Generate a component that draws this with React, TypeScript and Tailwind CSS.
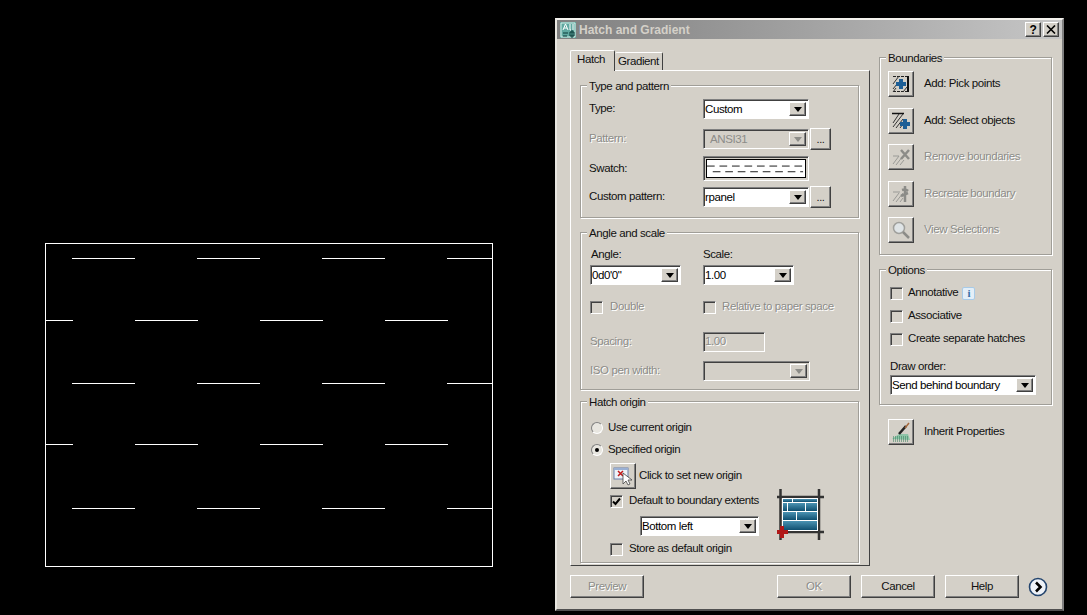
import React from "react";

const raised =
  "border border-t-white border-l-white border-r-[#404040] border-b-[#404040] shadow-[inset_-1px_-1px_0_#808080] bg-[#d4d0c8]";
const sunken =
  "border border-t-[#808080] border-l-[#808080] border-r-white border-b-white shadow-[inset_1px_1px_0_#404040]";
const disabledText = "text-[#8c8c88] [text-shadow:1px_1px_0_#ffffff]";

const Arrow = ({ off }: { off?: boolean }) => (
  <span className={`flex h-full w-[17px] shrink-0 items-center justify-center ${raised}`}>
    <span
      className={`h-0 w-0 border-x-[4px] border-t-[5px] border-x-transparent ${
        off ? "border-t-[#8c8c88]" : "border-t-black"
      }`}
    />
  </span>
);

const Combo = ({ value, off, className }: { value?: string; off?: boolean; className: string }) => (
  <div className={`flex h-[20px] items-stretch py-[2px] pl-[1px] pr-[2px] ${sunken} ${off ? "bg-[#d4d0c8]" : "bg-white"} ${className}`}>
    <span className={`flex-1 truncate leading-[15px] ${off ? "pl-[5px] text-[#8c8c88]" : "text-black"}`}>
      {value}
    </span>
    <Arrow off={off} />
  </div>
);

const Dots = () => (
  <div className={`ml-[1px] flex h-[22px] w-[21px] items-center justify-center text-[11px] leading-none ${raised}`}>
    ...
  </div>
);

const Box = ({ checked }: { checked?: boolean }) => (
  <span className={`flex h-[13px] w-[13px] shrink-0 items-center justify-center ${sunken} bg-[#d4d0c8]`}>
    {checked && (
      <svg width="9" height="9" viewBox="0 0 9 9">
        <path d="M1 4.5 3.5 7 8 1.5" fill="none" stroke="#000" strokeWidth="2" />
      </svg>
    )}
  </span>
);

const Check = ({
  label,
  checked,
  off,
  className = "",
  gap = "mr-[5px]",
}: {
  label: string;
  checked?: boolean;
  off?: boolean;
  className?: string;
  gap?: string;
}) => (
  <div className={`flex h-[16px] items-center ${className}`}>
    <span className={gap}>
      <Box checked={checked} />
    </span>
    <span className={off ? disabledText : ""}>{label}</span>
  </div>
);

const Radio = ({ label, on, className = "" }: { label: string; on?: boolean; className?: string }) => (
  <div className={`flex h-[16px] items-center ${className}`}>
    <span className="mr-[5px] flex h-[12px] w-[12px] items-center justify-center rounded-full border border-t-[#808080] border-l-[#808080] border-r-white border-b-white bg-[#e8e6e0]">
      {on && <span className="h-[4px] w-[4px] rounded-full bg-black" />}
    </span>
    {label}
  </div>
);

const Group = ({ title, className, children }: { title: string; className: string; children: React.ReactNode }) => (
  <div className={`relative border border-[#a09e98] shadow-[1px_1px_0_#fff,inset_1px_1px_0_#fff] ${className}`}>
    <span className="absolute -top-[8px] left-[6px] bg-[#d4d0c8] px-[2px] leading-[16px]">{title}</span>
    {children}
  </div>
);

const IconButton = ({ children, className = "" }: { children: React.ReactNode; className?: string }) => (
  <div className={`flex h-[26px] w-[26px] shrink-0 items-center justify-center ${raised} ${className}`}>{children}</div>
);

const PickPointsIcon = () => (
  <svg width="18" height="18" viewBox="0 0 18 18">
    <path d="M1 1.5h15M1 16.5h15" stroke="#222" strokeDasharray="3 1" />
    <path d="M16 1v16" stroke="#111" strokeWidth="2" />
    <path d="M1 9 7 1M1 14l4-5M1 17l3-4M11 17l4-5" stroke="#333" />
    <path d="M9 4v10M4 9h10" stroke="#1e5f96" strokeWidth="4" />
  </svg>
);

const SelectObjectsIcon = () => (
  <svg width="20" height="18" viewBox="0 0 20 18">
    <path d="M1 1.5h12" stroke="#111" strokeWidth="1.5" />
    <path d="M2 11 8 2M2 15 12 2M5 16 12 7M9 16l3-4" stroke="#333" fill="none" />
    <path d="M14 7v10M9 12h10" stroke="#1e5f96" strokeWidth="4" />
  </svg>
);

const RemoveIcon = () => (
  <svg width="20" height="20" viewBox="0 0 20 20">
    <path d="M2 17 8 9M5 18l7-9M9 18l4-5M2 9h6" stroke="#9a9a96" fill="none" />
    <path d="M10 3l8 9M18 3l-8 9" stroke="#8c8c88" strokeWidth="2.5" />
  </svg>
);

const RecreateIcon = () => (
  <svg width="20" height="20" viewBox="0 0 20 20">
    <path d="M2 17 8 9M5 18l7-9M9 18l3-4M2 8h7" stroke="#9a9a96" fill="none" />
    <path d="M14 2v16M11 6c3-1 5 0 6 1M10 12l7-3" stroke="#8c8c88" strokeWidth="2.5" fill="none" />
  </svg>
);

const ViewIcon = () => (
  <svg width="20" height="20" viewBox="0 0 20 20">
    <circle cx="8" cy="8" r="5.5" fill="#dfe4e6" stroke="#a0a09c" strokeWidth="1.5" />
    <path d="M12 12l6 6" stroke="#8c8c88" strokeWidth="2.5" />
  </svg>
);

const InheritIcon = () => (
  <svg width="20" height="20" viewBox="0 0 20 20">
    <path d="M1 17 8 12 17 12 19 18Z" fill="#8fc4a8" />
    <path d="M2 15h16M2 17h16M2 19h16" stroke="#2f7d58" strokeDasharray="1 1" />
    <path d="M8 12 15 4" stroke="#222" strokeWidth="2.5" />
    <path d="M14 6 18 1" stroke="#a5663a" strokeWidth="1.5" />
  </svg>
);

const OriginIcon = () => (
  <svg width="22" height="22" viewBox="0 0 22 22">
    <rect x="2" y="3" width="14" height="11" fill="#eef2f8" stroke="#6a7fa8" />
    <path d="M2 3h14v2H2z" fill="#9ab0d4" />
    <path d="M6 6l5 5M11 6l-5 5" stroke="#c01818" strokeWidth="1.5" />
    <path d="M11 8v11l3-3 2 4 2-1-2-4h4z" fill="#fff" stroke="#444" strokeWidth="0.8" />
  </svg>
);

const BrickIcon = () => (
  <svg width="50" height="52" viewBox="0 0 50 52" className="shrink-0">
    <defs>
      <linearGradient id="brick" x1="0" y1="0" x2="0" y2="1">
        <stop offset="0" stopColor="#4b93b3" />
        <stop offset="1" stopColor="#0f4f70" />
      </linearGradient>
    </defs>
    <path d="M0 8h47M0 43h47M3.5 0v51M42 0v51" stroke="#333" strokeWidth="2.5" />
    <rect x="5" y="9" width="36" height="33" fill="#fff" />
    {[
      [6, 10, 9, 3],
      [16, 10, 24, 3],
      [6, 14, 4, 8],
      [11, 14, 17, 8],
      [29, 14, 11, 8],
      [6, 23, 13, 8],
      [20, 23, 20, 8],
      [6, 32, 34, 9],
    ].map(([x, y, w, h]) => (
      <rect key={`${x}-${y}`} x={x} y={y} width={w} height={h} fill="url(#brick)" />
    ))}
    <path d="M5 37v12M-1 43h12" stroke="#b01818" strokeWidth="4" />
  </svg>
);

const AppIcon = () => (
  <svg width="16" height="16" viewBox="0 0 16 16" className="mx-[3px] shrink-0">
    <rect width="16" height="16" fill="#5fa8a0" />
    <path d="M1 1h14v14H1z" fill="none" stroke="#d8efe8" />
    <path d="M3 8 5.5 2 8 8M4 6h3M10 2v6h1M13 2v6" stroke="#fff" fill="none" />
    <path d="M3 11h5M3 14h4M10 10h4v4h-4zM12 8v8" stroke="#0b3a38" fill="none" />
  </svg>
);

const Swatch = () => (
  <div className={`flex h-[25px] w-[106px] items-stretch p-[2px] ${sunken} bg-[#d4d0c8]`}>
    <svg width="100%" height="100%" viewBox="0 0 102 21" preserveAspectRatio="none" className="border-[1px] border-black bg-white">
      <path d="M0 7.5h100" stroke="#000" strokeWidth="1" strokeDasharray="8 5" />
      <path d="M6 14.5h94" stroke="#000" strokeWidth="1" strokeDasharray="8 5" />
    </svg>
  </div>
);

const DialogButton = ({ label, off, className }: { label: string; off?: boolean; className: string }) => (
  <div className={`flex h-[23px] w-[74px] items-center justify-center ${raised} ${off ? disabledText : ""} ${className}`}>
    {label}
  </div>
);

const HatchDrawing = () => {
  const rows = [
    { y: 258.5, segs: [[72, 135], [197, 260], [322, 385], [447, 492]] },
    { y: 320.5, segs: [[46, 73], [135, 198], [260, 323], [385, 448]] },
    { y: 383.5, segs: [[72, 135], [197, 260], [322, 385], [447, 492]] },
    { y: 444.5, segs: [[46, 73], [135, 198], [260, 323], [385, 448]] },
    { y: 508.5, segs: [[72, 135], [197, 260], [322, 385], [447, 492]] },
  ];
  return (
    <svg width="555" height="615" viewBox="0 0 555 615" className="shrink-0">
      <rect x="45.5" y="243.5" width="447" height="323" fill="none" stroke="#fff" />
      {rows.map((r) =>
        r.segs.map(([a, b]) => <path key={`${r.y}-${a}`} d={`M${a} ${r.y}H${b}`} stroke="#fff" />)
      )}
    </svg>
  );
};

export default function App() {
  return (
    <div className="flex h-[615px] w-[1087px] overflow-hidden bg-black font-['Liberation_Sans',sans-serif] text-[11.5px] tracking-[-0.4px] text-[#111]">
      <HatchDrawing />

      <div className="mt-[18px] flex h-[593px] w-[509px] shrink-0 flex-col border-2 border-t-[#f4f2ee] border-l-[#e8e6e0] border-r-[#808080] border-b-[#505050] bg-[#d4d0c8]">
        {/* title bar */}
        <div className="flex h-[19px] shrink-0 items-center bg-gradient-to-r from-[#808080] to-[#c6c6c6]">
          <AppIcon />
          <span className="text-[12px] font-bold tracking-normal text-[#d4d0c8]">Hatch and Gradient</span>
          <div className={`ml-auto flex h-[15px] w-[16px] items-center justify-center text-[12px] font-bold text-black ${raised}`}>?</div>
          <div className={`ml-[2px] mr-[3px] flex h-[15px] w-[16px] items-center justify-center ${raised}`}>
            <svg width="10" height="9" viewBox="0 0 10 9">
              <path d="M1 0.5l8 8M9 0.5l-8 8" stroke="#000" strokeWidth="1.6" />
            </svg>
          </div>
        </div>

        <div className="ml-[13px] flex flex-1 gap-[9px]">
          {/* left column */}
          <div className="mt-[11px] flex w-[300px] shrink-0 flex-col">
            <div className="flex h-[20px] items-end">
              <div className="relative z-10 -mb-[1px] flex h-[21px] w-[45px] items-center rounded-t-[2px] border-l border-t border-r border-l-white border-t-white border-r-[#404040] bg-[#d4d0c8] pb-[3px] pl-[6px]">
                Hatch
              </div>
              <div className="flex h-[18px] w-[48px] items-center rounded-t-[2px] border-t border-r border-t-white border-r-[#404040] pl-[3px]">
                Gradient
              </div>
            </div>
            <div className="flex h-[496px] flex-col border border-t-white border-l-white border-r-[#404040] border-b-[#404040] px-[9px] pt-[14px]">
              <Group title="Type and pattern" className="h-[133px] w-[279px] shrink-0 pl-[8px] pt-[13px]">
                <div className="flex h-[20px] items-center">
                  <span className="w-[114px]">Type:</span>
                  <Combo value="Custom" className="w-[106px]" />
                </div>
                <div className="mt-[9px] flex h-[22px] items-center">
                  <span className={`w-[114px] ${disabledText}`}>Pattern:</span>
                  <Combo value="ANSI31" off className="w-[106px]" />
                  <Dots />
                </div>
                <div className="mt-[6px] flex h-[25px] items-center">
                  <span className="w-[114px]">Swatch:</span>
                  <Swatch />
                </div>
                <div className="mt-[5px] flex h-[22px] items-center">
                  <span className="w-[114px]">Custom pattern:</span>
                  <Combo value="rpanel" className="w-[106px]" />
                  <Dots />
                </div>
              </Group>

              <Group title="Angle and scale" className="mt-[14px] h-[158px] w-[279px] shrink-0 pl-[9px] pt-[14px]">
                <div className="flex">
                  <div className="w-[113px] pl-[1px] leading-[14px]">Angle:</div>
                  <div className="leading-[14px]">Scale:</div>
                </div>
                <div className="mt-[4px] flex">
                  <div className="w-[113px]">
                    <Combo value="0d0'0&quot;" className="w-[91px]" />
                  </div>
                  <Combo value="1.00" className="w-[91px]" />
                </div>
                <div className="mt-[14px] flex">
                  <Check label="Double" off className="w-[113px]" gap="mr-[7px]" />
                  <Check label="Relative to paper space" off gap="mr-[6px]" />
                </div>
                <div className="mt-[17px] flex h-[20px] items-center">
                  <span className={`w-[113px] ${disabledText}`}>Spacing:</span>
                  <div className={`h-[20px] w-[62px] pl-[1px] leading-[17px] ${sunken} bg-[#d4d0c8] ${disabledText}`}>1.00</div>
                </div>
                <div className="mt-[9px] flex h-[20px] items-center">
                  <span className={`w-[113px] ${disabledText}`}>ISO pen width:</span>
                  <Combo off className="w-[107px]" />
                </div>
              </Group>

              <Group title="Hatch origin" className="mt-[11px] h-[162px] w-[279px] shrink-0 pl-[10px] pt-[18px]">
                <Radio label="Use current origin" />
                <Radio label="Specified origin" on className="mt-[6px]" />
                <div className="ml-[19px] mt-[5px] flex items-center">
                  <IconButton>
                    <OriginIcon />
                  </IconButton>
                  <span className="ml-[3px]">Click to set new origin</span>
                </div>
                <div className="ml-[19px] flex">
                  <div className="w-[167px] shrink-0">
                    <Check label="Default to boundary extents" checked className="mt-[4px]" gap="mr-[6px]" />
                    <div className="ml-[30px] mt-[7px]">
                      <Combo value="Bottom left" className="w-[119px]" />
                    </div>
                    <Check label="Store as default origin" className="mt-[5px]" gap="mr-[6px]" />
                  </div>
                  <BrickIcon />
                </div>
              </Group>
            </div>
          </div>

          {/* right column */}
          <div className="mt-[18px] flex w-[173px] shrink-0 flex-col">
            <Group title="Boundaries" className="h-[198px] shrink-0 pl-[8px] pt-[13px]">
              {[
                { label: "Add: Pick points", icon: <PickPointsIcon /> },
                { label: "Add: Select objects", icon: <SelectObjectsIcon /> },
                { label: "Remove boundaries", icon: <RemoveIcon />, off: true },
                { label: "Recreate boundary", icon: <RecreateIcon />, off: true },
                { label: "View Selections", icon: <ViewIcon />, off: true },
              ].map((b) => (
                <div key={b.label} className="mb-[10.5px] flex items-center">
                  <IconButton>{b.icon}</IconButton>
                  <span className={`ml-[10px] ${b.off ? disabledText : ""}`}>{b.label}</span>
                </div>
              ))}
            </Group>

            <Group title="Options" className="mt-[14px] h-[136px] shrink-0 pl-[10px] pt-[15px]">
              <div className="flex items-center">
                <Check label="Annotative" />
                <span className="ml-[4px] flex h-[13px] w-[13px] items-center justify-center rounded-[2px] border border-[#a8cbe8] bg-[#e4eff8] font-['Liberation_Serif',serif] text-[11px] font-bold text-[#3a6ea5]">
                  i
                </span>
              </div>
              <Check label="Associative" className="mt-[7px]" />
              <Check label="Create separate hatches" className="mt-[7px]" />
              <div className="mt-[12px] leading-[14px]">Draw order:</div>
              <Combo value="Send behind boundary" className="mt-[2px] w-[146px]" />
            </Group>

            <div className="ml-[9px] mt-[14px] flex items-center">
              <IconButton>
                <InheritIcon />
              </IconButton>
              <span className="ml-[10px]">Inherit Properties</span>
            </div>
          </div>
        </div>

        {/* bottom buttons */}
        <div className="mb-[11px] ml-[13px] flex items-center">
          <DialogButton label="Preview" off className="" />
          <DialogButton label="OK" off className="ml-[133px]" />
          <DialogButton label="Cancel" className="ml-[10px]" />
          <DialogButton label="Help" className="ml-[10px]" />
          <svg width="20" height="20" viewBox="0 0 20 20" className="ml-[9px]">
            <circle cx="10" cy="10" r="8.5" fill="#eef2f8" stroke="#24456e" strokeWidth="1.6" />
            <path d="M8 5.5 12.5 10 8 14.5" fill="none" stroke="#000" strokeWidth="2.6" />
          </svg>
        </div>
      </div>
    </div>
  );
}
